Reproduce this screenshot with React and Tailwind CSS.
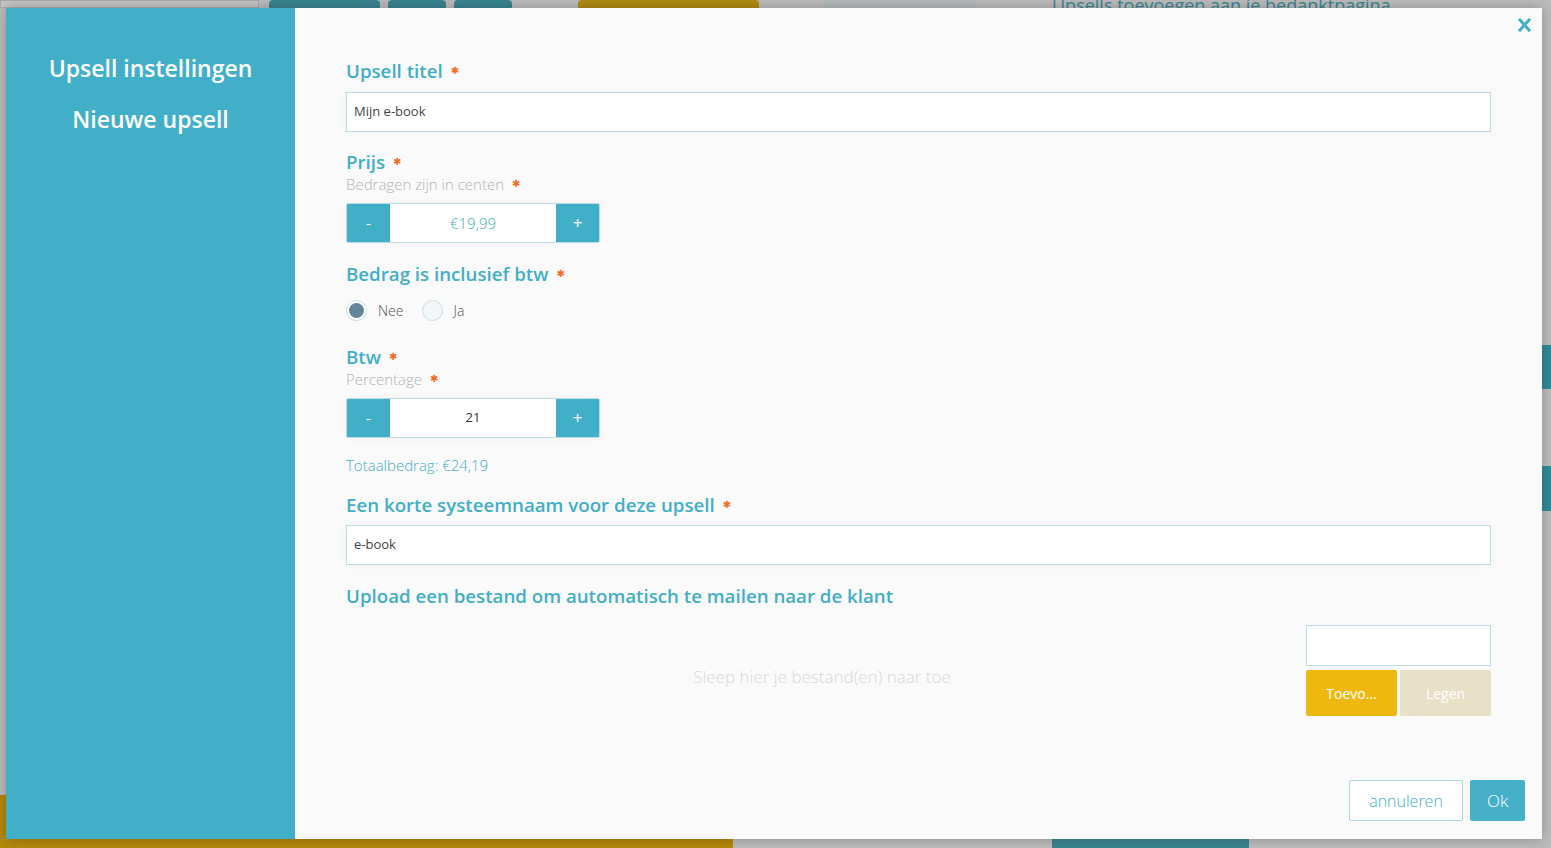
import React from "react";

const Star = () => (
  <span className="ml-2 font-['DejaVu_Sans',sans-serif] text-[10px] leading-none text-[#f26b21]">✱</span>
);

const Label = ({ children, star = true }) => (
  <div className="flex items-center text-[18.7px] font-semibold leading-[28px] text-[#42aec6]">
    {children}
    {star && <Star />}
  </div>
);

const SubLabel = ({ children }) => (
  <div className="-mt-[2px] flex items-center text-[15px] font-light leading-[20px] text-[#b3b3b3]">
    {children}
    <Star />
  </div>
);

const Stepper = ({ value, teal }) => (
  <div className="flex h-[40px] w-[254px] overflow-hidden rounded-[2px] border border-[#bcdbe3] shadow-[0_0_10px_rgba(0,0,0,0.04)]">
    <button className="w-[43px] bg-[#42afc8] text-[15px] text-white">-</button>
    <div className={`flex flex-1 items-center justify-center bg-white ${teal ? "text-[15px] font-light text-[#42aec6]" : "text-[13px] text-[#333]"}`}>
      {value}
    </div>
    <button className="w-[43px] bg-[#42afc8] text-[17px] text-white">+</button>
  </div>
);

const TextInput = ({ value }) => (
  <div className="flex h-[40px] items-center border border-[#bcdde6] bg-white px-[7px] text-[13px] text-[#444] shadow-[0_0_10px_rgba(0,0,0,0.04)]">
    {value}
  </div>
);

export default function App() {
  return (
    <div className="relative h-[848px] w-[1551px] overflow-hidden bg-[#bcbcbc] font-['Open_Sans',sans-serif]">
      {/* page behind the overlay */}
      <div className="flex h-[8px] items-start gap-2 overflow-hidden">
        <div className="h-[8px] w-[259px] border border-[#a9a9a9] bg-[#c4c4c4]" />
        <div className="ml-[2px] h-[8px] w-[111px] rounded-t bg-[#3a8591]" />
        <div className="h-[8px] w-[58px] rounded-t bg-[#3a8591]" />
        <div className="h-[8px] w-[58px] rounded-t bg-[#3a8591]" />
        <div className="ml-[58px] h-[8px] w-[181px] rounded-t bg-[#b18b12]" />
        <div className="ml-[57px] h-[8px] w-[152px] bg-[#b4b9ba]" />
        <div className="ml-[68px] whitespace-nowrap text-[18px] leading-[10px] text-[#3a8591]">Upsells toevoegen aan je bedanktpagina</div>
      </div>
      <div className="absolute bottom-0 left-0 h-[53px] w-[733px] bg-[#b3890c]" />
      <div className="absolute bottom-0 left-[1052px] h-[9px] w-[197px] bg-[#3a8591]" />
      <div className="absolute right-0 top-[345px] h-[44px] w-[9px] bg-[#318a98]" />
      <div className="absolute right-0 top-[466px] h-[45px] w-[9px] bg-[#318a98]" />

      {/* modal */}
      <div className="absolute left-[6px] top-[8px] flex h-[831px] w-[1536px] shadow-[0_0_12px_rgba(0,0,0,0.25)]">
        <aside className="flex w-[289px] flex-col items-center bg-[#42afc8] pt-[44px] text-white">
          <div className="text-[23px] font-semibold leading-[32px]">Upsell instellingen</div>
          <div className="mt-[19px] text-[23px] font-semibold leading-[32px]">Nieuwe upsell</div>
        </aside>

        <main className="relative flex flex-1 flex-col bg-[#fafafa]">
          <button className="absolute right-[11px] top-[10px] text-[#42aec6]">
            <svg width="13" height="14" viewBox="0 0 13 14">
              <path d="M2 2 L11 12 M11 2 L2 12" stroke="currentColor" strokeWidth="3" strokeLinecap="square" />
            </svg>
          </button>

          <div className="flex-1 px-[51px] pt-[49px]">
            <Label>Upsell titel</Label>
            <div className="mt-[7px]">
              <TextInput value="Mijn e-book" />
            </div>

            <div className="mt-[16px]">
              <Label>Prijs</Label>
              <SubLabel>Bedragen zijn in centen</SubLabel>
            </div>
            <div className="mt-[9px]">
              <Stepper value="€19,99" teal />
            </div>

            <div className="mt-[17px]">
              <Label>Bedrag is inclusief btw</Label>
            </div>
            <div className="mt-[12px] flex items-center text-[14px] font-light text-[#555]">
              <span className="flex h-[21px] w-[21px] items-center justify-center rounded-full border border-[#c5dfe7] bg-white">
                <span className="h-[15px] w-[15px] rounded-full bg-[#648599]" />
              </span>
              <span className="ml-[11px]">Nee</span>
              <span className="ml-[19px] h-[21px] w-[21px] rounded-full border border-[#c5dfe7] bg-[#f3f6f7]" />
              <span className="ml-[10px]">Ja</span>
            </div>

            <div className="mt-[22px]">
              <Label>Btw</Label>
              <SubLabel>Percentage</SubLabel>
            </div>
            <div className="mt-[9px]">
              <Stepper value="21" />
            </div>

            <div className="mt-[17px] text-[15px] font-light leading-[20px] text-[#42aec6]">Totaalbedrag: €24,19</div>

            <div className="mt-[16px]">
              <Label>Een korte systeemnaam voor deze upsell</Label>
            </div>
            <div className="mt-[6px]">
              <TextInput value="e-book" />
            </div>

            <div className="mt-[17px]">
              <Label star={false}>Upload een bestand om automatisch te mailen naar de klant</Label>
            </div>

            <div className="mt-[15px] flex gap-[8px]">
              <div className="flex flex-1 items-center justify-center pt-[12px] text-[17px] font-light text-[#d8d8d8]">
                Sleep hier je bestand(en) naar toe
              </div>
              <div className="flex w-[185px] flex-col gap-[4px]">
                <div className="h-[41px] border border-[#bcdde6] bg-white" />
                <div className="flex gap-[3px]">
                  <button className="h-[46px] w-[91px] rounded-[2px] bg-[#efb810] text-[14px] text-white">Toevo...</button>
                  <button className="h-[46px] w-[91px] rounded-[2px] bg-[#e8e0c7] text-[14px] text-white">Legen</button>
                </div>
              </div>
            </div>
          </div>

          <div className="flex justify-end gap-[7px] pb-[18px] pr-[17px]">
            <button className="h-[41px] w-[114px] rounded-[2px] border border-[#a9d9e5] bg-white text-[16px] font-light text-[#42aec6]">
              annuleren
            </button>
            <button className="h-[41px] w-[55px] rounded-[2px] bg-[#45b0c7] text-[17px] font-light text-white">Ok</button>
          </div>
        </main>
      </div>
    </div>
  );
}
